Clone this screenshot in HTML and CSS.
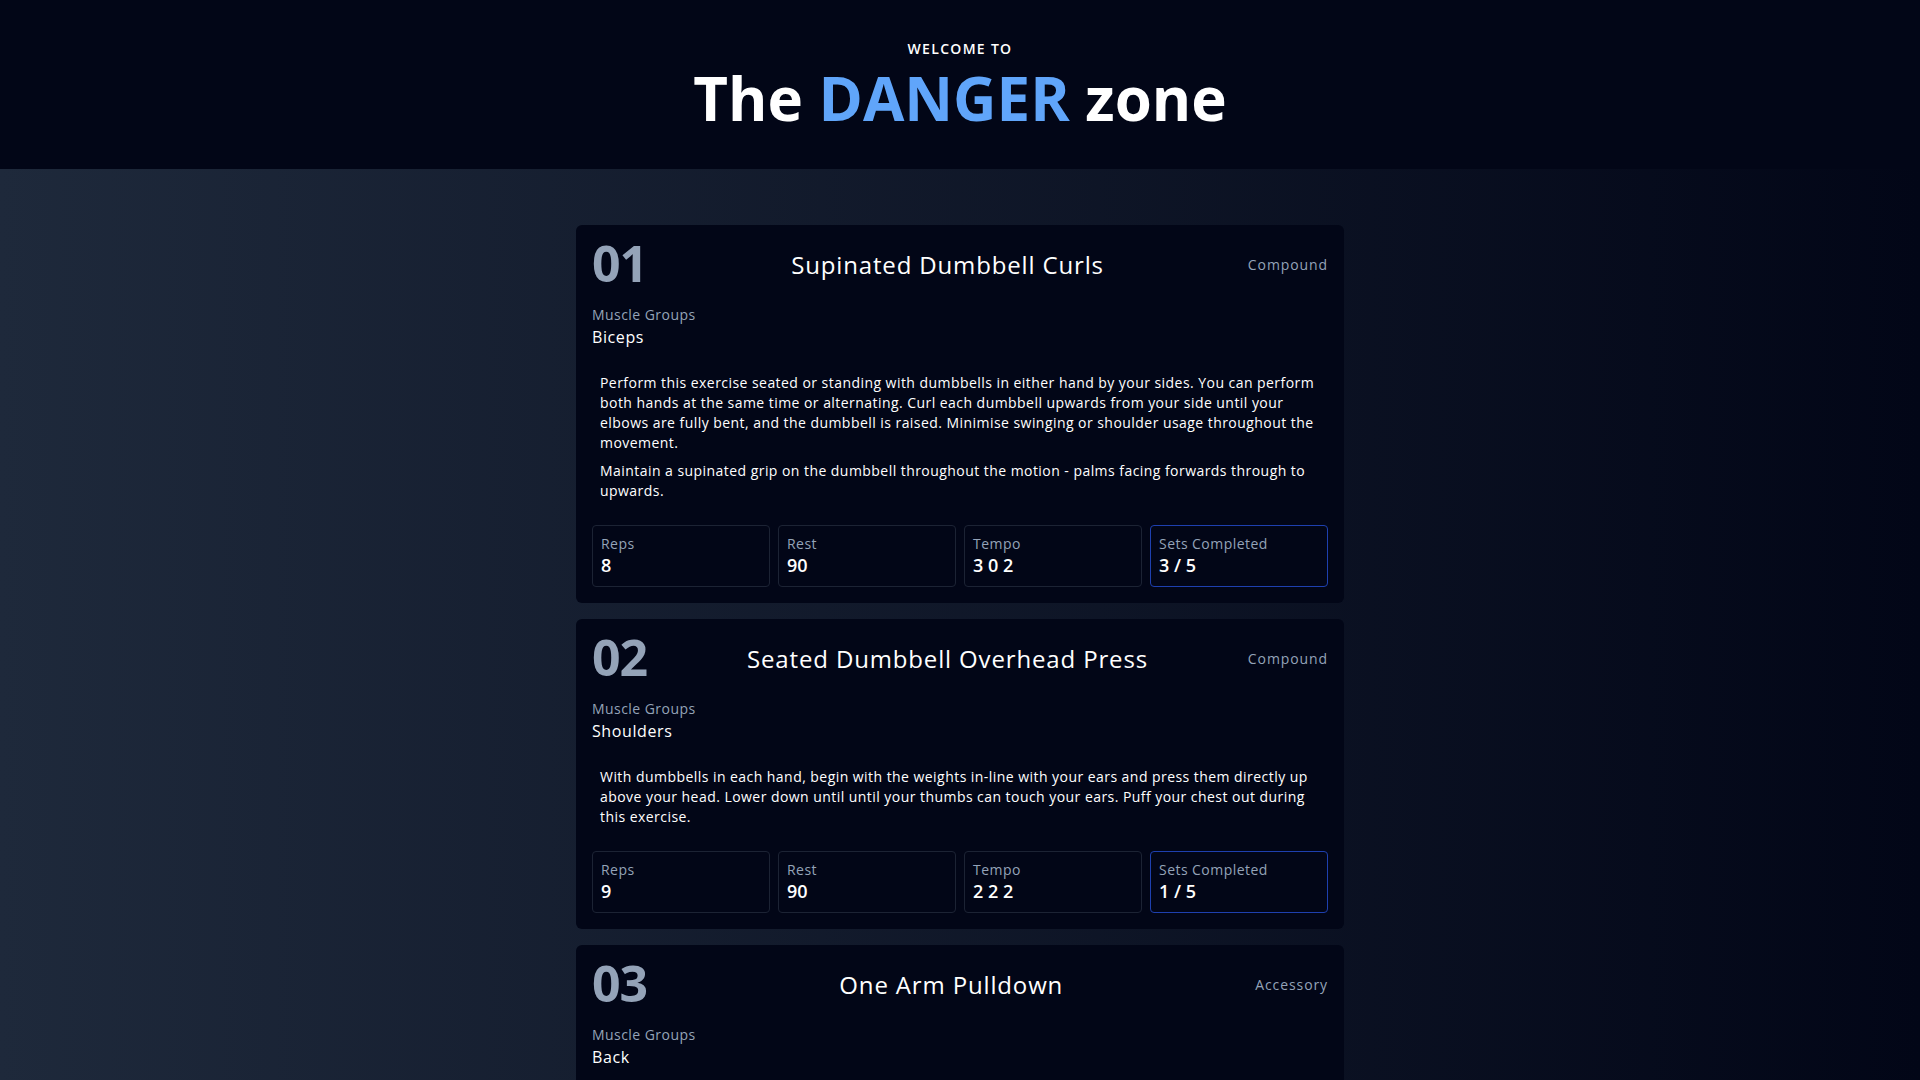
FILE: index.html
```html
<!DOCTYPE html>
<html lang="en">
<head>
<meta charset="utf-8">
<title>The DANGER zone</title>
<link rel="stylesheet" href="styles.css">
</head>
<body>
<header class="hero">
  <p class="eyebrow">WELCOME TO</p>
  <h1 class="title">The <span class="accent">DANGER</span> zone</h1>
</header>
<main class="workout">
  <div class="list">
    <article class="card">
      <div class="card-head">
        <span class="num">01</span>
        <h2 class="name">Supinated Dumbbell Curls</h2>
        <span class="kind">Compound</span>
      </div>
      <div class="muscles">
        <p class="label">Muscle Groups</p>
        <p class="muscle">Biceps</p>
      </div>
      <div class="desc">
        <p>Perform this exercise seated or standing with dumbbells in either hand by your sides. You can perform both hands at the same time or alternating. Curl each dumbbell upwards from your side until your elbows are fully bent, and the dumbbell is raised. Minimise swinging or shoulder usage throughout the movement.</p>
        <p>Maintain a supinated grip on the dumbbell throughout the motion - palms facing forwards through to upwards.</p>
      </div>
      <div class="stats">
        <div class="stat"><p class="label">Reps</p><p class="value">8</p></div>
        <div class="stat"><p class="label">Rest</p><p class="value">90</p></div>
        <div class="stat"><p class="label">Tempo</p><p class="value">3 0 2</p></div>
        <div class="stat done"><p class="label">Sets Completed</p><p class="value">3 / 5</p></div>
      </div>
    </article>
    <article class="card">
      <div class="card-head">
        <span class="num">02</span>
        <h2 class="name">Seated Dumbbell Overhead Press</h2>
        <span class="kind">Compound</span>
      </div>
      <div class="muscles">
        <p class="label">Muscle Groups</p>
        <p class="muscle">Shoulders</p>
      </div>
      <div class="desc">
        <p>With dumbbells in each hand, begin with the weights in-line with your ears and press them directly up above your head. Lower down until until your thumbs can touch your ears. Puff your chest out during this exercise.</p>
      </div>
      <div class="stats">
        <div class="stat"><p class="label">Reps</p><p class="value">9</p></div>
        <div class="stat"><p class="label">Rest</p><p class="value">90</p></div>
        <div class="stat"><p class="label">Tempo</p><p class="value">2 2 2</p></div>
        <div class="stat done"><p class="label">Sets Completed</p><p class="value">1 / 5</p></div>
      </div>
    </article>
    <article class="card">
      <div class="card-head">
        <span class="num">03</span>
        <h2 class="name">One Arm Pulldown</h2>
        <span class="kind">Accessory</span>
      </div>
      <div class="muscles">
        <p class="label">Muscle Groups</p>
        <p class="muscle">Back</p>
      </div>
      <div class="desc">
        <p>Using a single handle on the cable machine, pull the handle down towards your side while keeping your torso upright. Squeeze your lat at the bottom and control the weight on the way up.</p>
      </div>
      <div class="stats">
        <div class="stat"><p class="label">Reps</p><p class="value">12</p></div>
        <div class="stat"><p class="label">Rest</p><p class="value">60</p></div>
        <div class="stat"><p class="label">Tempo</p><p class="value">2 1 2</p></div>
        <div class="stat done"><p class="label">Sets Completed</p><p class="value">0 / 3</p></div>
      </div>
    </article>
  </div>
</main>
</body>
</html>
```
FILE: styles.css
```css
* { box-sizing: border-box; }
html, body { margin: 0; padding: 0; }
body {
  font-family: "Open Sans", "Noto Sans", sans-serif;
  background: #020617;
  color: #ffffff;
  letter-spacing: 0.3px;
}
p, h1, h2 { margin: 0; }

.hero {
  background: #020617;
  display: flex;
  flex-direction: column;
  align-items: center;
  padding: 39px 0 41px;
  gap: 9px;
}
.eyebrow {
  font-size: 14px;
  line-height: 20px;
  font-weight: 600;
  letter-spacing: 1.3px;
}
.title {
  font-size: 60px;
  line-height: 60px;
  font-weight: 700;
  letter-spacing: 0;
}
.accent { color: #60a5fa; }

.workout {
  background: linear-gradient(to right, #1e293b, #020617);
  padding: 56px 0 56px;
  min-height: 911px;
}
.list {
  width: 768px;
  margin: 0 auto;
  display: flex;
  flex-direction: column;
  gap: 16px;
}
.card {
  background: #020617;
  border-radius: 6px;
  padding: 16px;
  display: flex;
  flex-direction: column;
  gap: 16px;
}
.card-head {
  display: flex;
  align-items: center;
  justify-content: space-between;
  height: 48px;
}
.num {
  font-size: 50px;
  line-height: 45px;
  padding-bottom: 3px;
  font-weight: 700;
  color: #94a3b8;
  letter-spacing: -1px;
}
.name {
  font-size: 24px;
  line-height: 32px;
  font-weight: 400;
  letter-spacing: 0.85px;
}
.kind {
  font-size: 14px;
  line-height: 20px;
  color: #94a3b8;
  letter-spacing: 0.9px;
}
.label {
  font-size: 14px;
  line-height: 20px;
  color: #94a3b8;
  letter-spacing: 0.45px;
}
.muscle {
  font-size: 16px;
  line-height: 24px;
  letter-spacing: 0.6px;
}
.desc {
  padding: 8px;
  display: flex;
  flex-direction: column;
  gap: 8px;
  font-size: 14px;
  line-height: 20px;
  letter-spacing: 0.45px;
}
.stats {
  display: grid;
  grid-template-columns: repeat(4, 1fr);
  gap: 8px;
}
.stat {
  border: 1px solid #1c2334;
  border-radius: 4px;
  padding: 8px 8px 9px;
}
.stat.done { border-color: #1e40af; }
.value {
  font-size: 18px;
  line-height: 23px;
  font-weight: 600;
  letter-spacing: 0;
}
```
